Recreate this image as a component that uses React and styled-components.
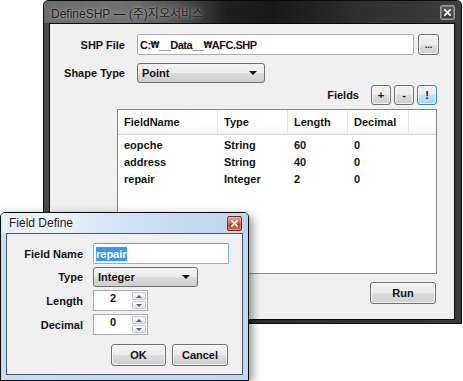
import React from "react";
import styled, { createGlobalStyle } from "styled-components";

const GlobalStyle = createGlobalStyle`
  html, body {
    margin: 0;
    padding: 0;
    background: #ffffff;
  }
  body {
    width: 463px;
    height: 381px;
    overflow: hidden;
    font-family: "Liberation Sans", "Noto Sans CJK KR", sans-serif;
  }
`;

const uiFont = `"Liberation Sans", "Noto Sans CJK KR", sans-serif`;

const DesktopSC = styled.div`
  position: relative;
  width: 463px;
  height: 381px;
  overflow: hidden;
`;

// Windows

const WindowSC = styled.div`
  position: absolute;
  left: ${props => props.x}px;
  top: ${props => props.y}px;
  width: ${props => props.w}px;
  height: ${props => props.h}px;
  box-sizing: border-box;
  display: flex;
  flex-direction: column;
  border: 1px solid #0c0c0c;
  border-radius: 5px 5px 0 0;
  padding: 0 ${props => props.padRight}px ${props => props.padBottom}px 5px;
  background: ${props => props.frame};
  box-shadow: ${props => props.shadow || "none"};
`;

const TitleBarSC = styled.div`
  height: ${props => props.h}px;
  flex: none;
  display: flex;
  align-items: center;
  justify-content: space-between;
  margin: 0 -${props => props.padRight}px 0 -5px;
  padding: 0 ${props => props.closeRight}px 0 ${props => props.textLeft}px;
  background: ${props => props.bg};
  border-radius: 4px 4px 0 0;
`;

const TitleTextSC = styled.span`
  font-family: ${uiFont};
  font-size: 12px;
  color: #1c1c1c;
  text-shadow: 0 0 6px rgba(255, 255, 255, 0.55), 0 0 2px rgba(255, 255, 255, 0.4);
  white-space: nowrap;
`;

const CloseButtonSC = styled.div`
  width: ${props => props.w}px;
  height: ${props => props.h}px;
  box-sizing: border-box;
  display: flex;
  align-items: center;
  justify-content: center;
  border: 1px solid ${props => (props.red ? "#6e2a1c" : "#9a9a9a")};
  border-radius: 2px;
  background: ${props =>
    props.red
      ? "linear-gradient(#e8a594 0%, #d8664a 45%, #c2361a 55%, #d96a4c 100%)"
      : "linear-gradient(#5a5a5a, #3a3a3a)"};
  box-shadow: inset 0 0 0 1px rgba(255, 255, 255, 0.25);
`;

const ClientSC = styled.div`
  flex: 1;
  box-sizing: border-box;
  border: 1px solid ${props => props.edge};
  background: #f0f0f0;
  font-family: ${uiFont};
  font-size: 11px;
  font-weight: bold;
  color: #141414;
  padding: ${props => props.pad};
  display: flex;
  flex-direction: column;
`;

// Form parts

const FormGridSC = styled.div`
  display: grid;
  grid-template-columns: ${props => props.labelWidth}px 1fr;
  column-gap: ${props => props.gap}px;
  row-gap: ${props => props.rowGap}px;
  align-items: center;
`;

const LabelSC = styled.div`
  text-align: right;
  white-space: nowrap;
`;

const InlineSC = styled.div`
  display: flex;
  align-items: center;
  gap: ${props => props.gap || 0}px;
`;

const TextBoxSC = styled.div`
  width: ${props => (props.w ? `${props.w}px` : "auto")};
  flex: ${props => (props.w ? "none" : 1)};
  height: 21px;
  box-sizing: border-box;
  display: flex;
  align-items: center;
  padding: 0 2px;
  background: #ffffff;
  border: 1px solid ${props => (props.focused ? "#7eb4ea" : "#abadb3")};
  border-top-color: ${props => (props.focused ? "#569de5" : "#abadb3")};
  border-radius: 2px;
  white-space: nowrap;
  letter-spacing: ${props => (props.tight ? "-0.5px" : "normal")};
`;

const WonSC = styled.span`
  font-family: "DejaVu Sans Condensed", "DejaVu Sans", sans-serif;
  font-size: 9px;
  font-weight: bold;
`;

const SelectedSC = styled.span`
  background: #3399ff;
  color: #ffffff;
  padding: 1px 0;
`;

const ComboSC = styled.div`
  width: ${props => props.w}px;
  height: 20px;
  box-sizing: border-box;
  display: flex;
  align-items: center;
  justify-content: space-between;
  padding: 0 7px 0 4px;
  border: 1px solid #707070;
  border-radius: 3px;
  background: linear-gradient(#f3f3f3 0%, #ebebeb 50%, #dddddd 51%, #cfcfcf 100%);
`;

const ArrowSC = styled.span`
  width: 0;
  height: 0;
  border-left: 4px solid transparent;
  border-right: 4px solid transparent;
  border-top: 4px solid #111;
`;

const ButtonSC = styled.div`
  width: ${props => props.w}px;
  height: ${props => props.h || 22}px;
  flex: none;
  box-sizing: border-box;
  display: flex;
  align-items: center;
  justify-content: center;
  border: 1px solid ${props => (props.focused ? "#3c7fb1" : "#707070")};
  border-radius: 3px;
  background: ${props =>
    props.focused
      ? "linear-gradient(#eaf6fd 0%, #d9f0fc 50%, #bee6fd 51%, #a7d9f5 100%)"
      : "linear-gradient(#f2f2f2 0%, #ebebeb 50%, #dddddd 51%, #cfcfcf 100%)"};
  box-shadow: inset 0 0 0 1px rgba(255, 255, 255, 0.7);
  font-size: ${props => props.fs || 11}px;
  color: #141414;
`;

const SpinSC = styled.div`
  width: 55px;
  height: 21px;
  box-sizing: border-box;
  display: flex;
  border: 1px solid #abadb3;
  background: #ffffff;
`;

const SpinValueSC = styled.div`
  flex: 1;
  text-align: center;
  padding-top: 1px;
`;

const SpinButtonsSC = styled.div`
  width: 14px;
  display: flex;
  flex-direction: column;
  gap: 1px;
  padding: 1px 1px 1px 0;
`;

const SpinArrowSC = styled.div`
  flex: 1;
  display: flex;
  align-items: center;
  justify-content: center;
  border: 1px solid #c6c9d0;
  border-radius: 1px;
  background: linear-gradient(#f7f7f7, #e4e6ea);
  &::after {
    content: "";
    width: 0;
    height: 0;
    border-left: 3px solid transparent;
    border-right: 3px solid transparent;
    ${props =>
      props.up ? "border-bottom: 3px solid #4d6185;" : "border-top: 3px solid #4d6185;"}
  }
`;

// Field list

const TableSC = styled.div`
  margin: 0 2px 0 67px;
  height: 165px;
  box-sizing: border-box;
  border: 1px solid #828790;
  background: #ffffff;
`;

const RowSC = styled.div`
  display: grid;
  grid-template-columns: 100px 70px 60px 61px 1fr;
  height: ${props => (props.head ? 24 : 17)}px;
  align-items: center;
  background: ${props =>
    props.head ? "linear-gradient(#ffffff 0%, #ffffff 60%, #f4f5f7 100%)" : "transparent"};
  border-bottom: ${props => (props.head ? "1px solid #d5d5d5" : "none")};
  margin-bottom: ${props => (props.head ? 1 : 0)}px;
`;

const CellSC = styled.div`
  height: 100%;
  display: flex;
  align-items: center;
  padding-left: 6px;
  border-right: ${props => (props.head ? "1px solid #e3e5e9" : "none")};
  white-space: nowrap;
`;

const FieldsBarSC = styled.div`
  display: flex;
  justify-content: flex-end;
  align-items: center;
  gap: 3px;
  margin: 2px 2px 4px 0;
`;

const FieldsLabelSC = styled.span`
  margin-right: 9px;
`;

const FooterSC = styled.div`
  display: flex;
  justify-content: flex-end;
  gap: 6px;
  margin: ${props => props.margin};
`;

const fields = [
  { name: "eopche", type: "String", length: 60, decimal: 0 },
  { name: "address", type: "String", length: 40, decimal: 0 },
  { name: "repair", type: "Integer", length: 2, decimal: 0 },
];

const Spinner = ({ value }) => (
  <SpinSC>
    <SpinValueSC>{value}</SpinValueSC>
    <SpinButtonsSC>
      <SpinArrowSC up />
      <SpinArrowSC />
    </SpinButtonsSC>
  </SpinSC>
);

const CloseGlyph = ({ size }) => (
  <svg width={size} height={size} viewBox="0 0 8 8">
    <path d="M1 1 L7 7 M7 1 L1 7" stroke="#ffffff" strokeWidth="2" strokeLinecap="square" />
  </svg>
);

const App = () => {
  return (
    <DesktopSC>
      <GlobalStyle />

      <WindowSC
        x={43}
        y={0}
        w={419}
        h={324}
        padRight={6}
        padBottom={3}
        frame="linear-gradient(90deg, #4a4a4a 0%, #2c2c2c 50%, #3a3a3a 100%)"
      >
        <TitleBarSC
          h={22}
          padRight={6}
          textLeft={7}
          closeRight={6}
          bg="linear-gradient(90deg, #6a6a6a 0%, #707070 18%, #5a5a5a 30%, #1e1e1e 44%, #171717 55%, #2e2e2e 75%, #3e3e3e 100%)"
        >
          <TitleTextSC>DefineSHP — (주)지오서비스</TitleTextSC>
          <CloseButtonSC w={15} h={15}>
            <CloseGlyph size={7} />
          </CloseButtonSC>
        </TitleBarSC>
        <ClientSC edge="#0a0a0a" pad="10px 15px 0 0">
          <FormGridSC labelWidth={75} gap={12} rowGap={8}>
            <LabelSC>SHP File</LabelSC>
            <InlineSC gap={4}>
              <TextBoxSC tight>
                C:<WonSC>₩</WonSC>__Data__<WonSC>₩</WonSC>AFC.SHP
              </TextBoxSC>
              <ButtonSC w={21} h={21} fs={9}>...</ButtonSC>
            </InlineSC>
            <LabelSC>Shape Type</LabelSC>
            <InlineSC>
              <ComboSC w={128}>
                <span>Point</span>
                <ArrowSC />
              </ComboSC>
            </InlineSC>
          </FormGridSC>

          <FieldsBarSC>
            <FieldsLabelSC>Fields</FieldsLabelSC>
            <ButtonSC w={20} h={20}>+</ButtonSC>
            <ButtonSC w={20} h={20}>-</ButtonSC>
            <ButtonSC w={20} h={20} focused>!</ButtonSC>
          </FieldsBarSC>

          <TableSC>
            <RowSC head>
              <CellSC head>FieldName</CellSC>
              <CellSC head>Type</CellSC>
              <CellSC head>Length</CellSC>
              <CellSC head>Decimal</CellSC>
              <CellSC />
            </RowSC>
            {fields.map(f => (
              <RowSC key={f.name}>
                <CellSC>{f.name}</CellSC>
                <CellSC>{f.type}</CellSC>
                <CellSC>{f.length}</CellSC>
                <CellSC>{f.decimal}</CellSC>
                <CellSC />
              </RowSC>
            ))}
          </TableSC>

          <FooterSC margin="8px 3px 0 0">
            <ButtonSC w={66} h={22}>Run</ButtonSC>
          </FooterSC>
        </ClientSC>
      </WindowSC>

      <WindowSC
        x={0}
        y={212}
        w={249}
        h={169}
        padRight={5}
        padBottom={5}
        frame="linear-gradient(90deg, #c9dcf0 0%, #c2d7ee 100%)"
        shadow="3px 3px 10px rgba(0, 0, 0, 0.45)"
      >
        <TitleBarSC
          h={20}
          padRight={5}
          textLeft={8}
          closeRight={6}
          bg="linear-gradient(90deg, #e6eef7 0%, #eef4fb 20%, #d3e5f7 45%, #c6dcf3 70%, #bcd5ef 100%)"
        >
          <TitleTextSC>Field Define</TitleTextSC>
          <CloseButtonSC w={15} h={15} red>
            <CloseGlyph size={7} />
          </CloseButtonSC>
        </TitleBarSC>
        <ClientSC edge="#4a5868" pad="9px 14px 0 0">
          <FormGridSC labelWidth={76} gap={10} rowGap={3}>
            <LabelSC>Field Name</LabelSC>
            <InlineSC>
              <TextBoxSC w={136} focused>
                <SelectedSC>repair</SelectedSC>
              </TextBoxSC>
            </InlineSC>
            <LabelSC>Type</LabelSC>
            <InlineSC>
              <ComboSC w={105}>
                <span>Integer</span>
                <ArrowSC />
              </ComboSC>
            </InlineSC>
            <LabelSC>Length</LabelSC>
            <InlineSC>
              <Spinner value={2} />
            </InlineSC>
            <LabelSC>Decimal</LabelSC>
            <InlineSC>
              <Spinner value={0} />
            </InlineSC>
          </FormGridSC>
          <FooterSC margin="9px 0 0 0">
            <ButtonSC w={55} h={22}>OK</ButtonSC>
            <ButtonSC w={56} h={22}>Cancel</ButtonSC>
          </FooterSC>
        </ClientSC>
      </WindowSC>
    </DesktopSC>
  );
};

export default App;
